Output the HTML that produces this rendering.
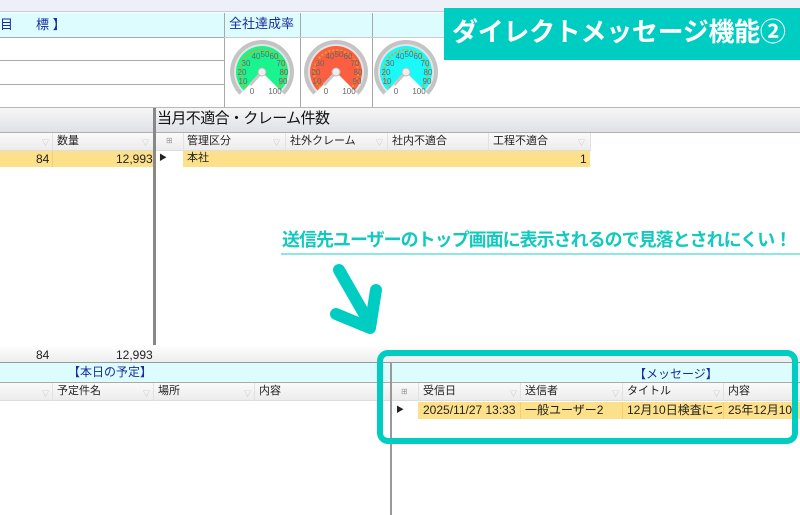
<!DOCTYPE html>
<html><head><meta charset="utf-8">
<style>
*{margin:0;padding:0;box-sizing:border-box}
body{width:800px;height:515px;overflow:hidden;background:#fff;position:relative;font-family:"Liberation Sans","Noto Sans CJK JP",sans-serif;font-size:11px;color:#222}
.a{position:absolute}
.hl{position:absolute;height:1px;background:#a8a8a8}
.vl{position:absolute;width:1px;background:#a8a8a8}
.cyan{background:#dcfcfd}
.hdr{background:linear-gradient(#fafafa,#ececec);border-bottom:1px solid #ddd}
.yel{background:#fde08a}
.t{position:absolute;white-space:nowrap;line-height:1}
.blue{color:#1a2c9c}
.f{position:absolute;font-size:7px;color:#bbb}
.sep{position:absolute;width:1px;background:#e2e2e2}
</style></head><body>
<div class="a" style="left:0;top:0;width:800px;height:11px;background:#eef0f8"></div>
<div class="hl" style="left:0;top:11px;width:800px;background:#c5cbe0"></div>
<div class="a cyan" style="left:0;top:13px;width:800px;height:24px"></div>
<div class="t blue" style="left:0;top:18px;font-size:13px">目</div>
<div class="t blue" style="left:36px;top:18px;font-size:13px">標 】</div>
<div class="t blue" style="left:229px;top:17px;font-size:13px">全社達成率</div>
<div class="hl" style="left:0;top:37px;width:224px"></div>
<div class="hl" style="left:0;top:60px;width:224px"></div>
<div class="hl" style="left:0;top:84px;width:224px"></div>
<div class="vl" style="left:224px;top:13px;height:94px"></div>
<div class="vl" style="left:300px;top:13px;height:94px"></div>
<div class="vl" style="left:372px;top:13px;height:94px"></div>
<div class="hl" style="left:224px;top:37px;width:230px;background:#ccc"></div>

<svg class="a" style="left:0;top:0" width="800" height="110">
<defs>
<g id="gb">
<path d="M0 0 L-22.6 22.6 A32 32 0 1 1 22.6 22.6 Z" fill="#c4c4c4"/>
<path d="M0 0 L-19.8 19.8 A28 28 0 1 1 19.8 19.8 Z" fill="#e4e4e4"/>
</g>
<g id="gt">
<path d="M-15.6 15.6 A22 22 0 1 1 15.6 15.6" fill="none" stroke="#e8a020" stroke-width="2" stroke-dasharray="2 2"/>
<g font-size="8" fill="#666" font-family="Liberation Sans,sans-serif" text-anchor="middle">
<text x="-6" y="-13">40</text><text x="3" y="-15">50</text><text x="12" y="-13">60</text>
<text x="-16" y="-6">30</text><text x="19" y="-6">70</text>
<text x="-20" y="3">20</text><text x="22" y="3">80</text>
<text x="-19" y="12">10</text><text x="21" y="12">90</text>
<text x="-10" y="22">0</text><text x="13" y="22">100</text></g>
<line x1="0" y1="0" x2="-12" y2="13" stroke="#c8c8c8" stroke-width="3"/>
<circle r="4" fill="#eee" stroke="#bbb"/>
</g>
</defs>
<g transform="translate(262,72)"><use href="#gb"/><path d="M0 0 L-18.4 18.4 A26 26 0 1 1 18.4 18.4 Z" fill="#19f48f"/><use href="#gt"/></g>
<g transform="translate(336,72)"><use href="#gb"/><path d="M0 0 L-18.4 18.4 A26 26 0 1 1 18.4 18.4 Z" fill="#fb5e40"/><use href="#gt"/></g>
<g transform="translate(406,72)"><use href="#gb"/><path d="M0 0 L-18.4 18.4 A26 26 0 1 1 18.4 18.4 Z" fill="#1af8f8"/><use href="#gt"/></g>
</svg>

<div class="a" style="left:444px;top:8px;width:356px;height:52px;background:#00cdc1"></div>
<div class="t" style="left:452px;top:19px;font-size:26px;font-weight:bold;color:#fff;letter-spacing:-0.3px">ダイレクトメッセージ機能②</div>

<div class="hl" style="left:0;top:107px;width:800px;background:#b8b8b8"></div>
<div class="a" style="left:0;top:108px;width:800px;height:24px;background:linear-gradient(#f6f6f6,#dfe1e6)"></div>
<div class="hl" style="left:0;top:132px;width:800px;background:#b0b0b0"></div>
<div class="t" style="left:157px;top:111px;font-size:15px;color:#111;letter-spacing:-0.6px">当月不適合・クレーム件数</div>
<div class="a" style="left:153px;top:108px;width:3px;height:255px;background:#888"></div>

<div class="a hdr" style="left:0;top:133px;width:153px;height:18px"></div>
<div class="a hdr" style="left:156px;top:133px;width:434px;height:18px"></div>
<div class="t" style="left:57px;top:136px">数量</div>
<div class="sep" style="left:52px;top:133px;height:18px"></div>
<div class="f" style="left:42px;top:138px">▽</div><div class="f" style="left:142px;top:138px">▽</div>
<div class="t" style="left:166px;top:137px;font-size:8px;color:#999">⊞</div>
<div class="t" style="left:187px;top:136px">管理区分</div>
<div class="t" style="left:290px;top:136px">社外クレーム</div>
<div class="t" style="left:392px;top:136px">社内不適合</div>
<div class="t" style="left:493px;top:136px">工程不適合</div>
<div class="sep" style="left:183px;top:133px;height:18px"></div>
<div class="sep" style="left:285px;top:133px;height:18px"></div>
<div class="sep" style="left:387px;top:133px;height:18px"></div>
<div class="sep" style="left:488px;top:133px;height:18px"></div>
<div class="sep" style="left:590px;top:133px;height:18px"></div>
<div class="f" style="left:273px;top:138px">▽</div><div class="f" style="left:376px;top:138px">▽</div><div class="f" style="left:578px;top:138px">▽</div>
<div class="a yel" style="left:0;top:151px;width:153px;height:16px"></div>
<div class="sep" style="left:52px;top:151px;height:16px;background:#f5d070"></div>
<div class="t" style="left:36px;top:153px;font-size:12px">84</div>
<div class="t" style="left:116px;top:153px;font-size:12px">12,993</div>
<div class="t" style="left:159px;top:154px;font-size:8px">▶</div>
<div class="a yel" style="left:183px;top:151px;width:407px;height:16px"></div>
<div class="t" style="left:187px;top:153px">本社</div>
<div class="t" style="left:580px;top:153px;font-size:12px">1</div>

<div class="t" style="left:282px;top:231px;font-size:18px;font-weight:bold;color:#12c9bf;letter-spacing:-1px">送信先ユーザーのトップ画面に表示されるので見落とされにくい！</div>
<div class="a" style="left:281px;top:253px;width:519px;height:2px;background:#8ee8e2"></div>
<svg class="a" style="left:325px;top:258px" width="70" height="80">
<path d="M14 12 L45 66" stroke="#00cdc1" stroke-width="12" stroke-linecap="round"/>
<path d="M11 56 L45 70 L51 32" fill="none" stroke="#00cdc1" stroke-width="12" stroke-linecap="round" stroke-linejoin="round"/>
</svg>

<div class="a" style="left:0;top:345px;width:800px;height:17px;background:linear-gradient(#fff,#eee)"></div>
<div class="t" style="left:36px;top:349px;font-size:12px">84</div>
<div class="t" style="left:116px;top:349px;font-size:12px">12,993</div>
<div class="hl" style="left:0;top:362px;width:800px;background:#999"></div>

<div class="a cyan" style="left:0;top:363px;width:800px;height:19px"></div>
<div class="hl" style="left:0;top:382px;width:800px;background:#aaa"></div>
<div class="t blue" style="left:68px;top:366px;font-size:12px">【本日の予定】</div>
<div class="t blue" style="left:634px;top:368px;font-size:12px">【メッセージ】</div>
<div class="a" style="left:390px;top:363px;width:2px;height:152px;background:#999"></div>
<div class="a hdr" style="left:0;top:383px;width:390px;height:18px"></div>
<div class="a hdr" style="left:392px;top:383px;width:408px;height:18px"></div>
<div class="sep" style="left:52px;top:383px;height:18px"></div>
<div class="sep" style="left:153px;top:383px;height:18px"></div>
<div class="sep" style="left:254px;top:383px;height:18px"></div>
<div class="f" style="left:42px;top:389px">▽</div><div class="f" style="left:143px;top:389px">▽</div><div class="f" style="left:244px;top:389px">▽</div>
<div class="t" style="left:57px;top:386px">予定件名</div>
<div class="t" style="left:158px;top:386px">場所</div>
<div class="t" style="left:259px;top:386px">内容</div>
<div class="t" style="left:401px;top:388px;font-size:8px;color:#999">⊞</div>
<div class="t" style="left:423px;top:386px">受信日</div>
<div class="t" style="left:525px;top:386px">送信者</div>
<div class="t" style="left:627px;top:386px">タイトル</div>
<div class="t" style="left:728px;top:386px">内容</div>
<div class="sep" style="left:418px;top:383px;height:18px"></div>
<div class="sep" style="left:520px;top:383px;height:18px"></div>
<div class="sep" style="left:622px;top:383px;height:18px"></div>
<div class="sep" style="left:723px;top:383px;height:18px"></div>
<div class="f" style="left:510px;top:389px">▽</div><div class="f" style="left:612px;top:389px">▽</div><div class="f" style="left:713px;top:389px">▽</div>
<div class="a yel" style="left:418px;top:402px;width:382px;height:17px"></div>
<div class="sep" style="left:520px;top:402px;height:17px;background:#f5d070"></div>
<div class="sep" style="left:622px;top:402px;height:17px;background:#f5d070"></div>
<div class="sep" style="left:723px;top:402px;height:17px;background:#f5d070"></div>
<div class="t" style="left:396px;top:406px;font-size:8px">▶</div>
<div class="t" style="left:423px;top:404px;font-size:12px">2025/11/27 13:33</div>
<div class="t" style="left:525px;top:404px;font-size:12px">一般ユーザー2</div>
<div class="a" style="left:627px;top:404px;width:95px;overflow:hidden;white-space:nowrap;font-size:12px;line-height:1">12月10日検査について</div>
<div class="a" style="left:728px;top:404px;width:66px;overflow:hidden;white-space:nowrap;font-size:12px;line-height:1">25年12月10日</div>

<div class="a" style="left:377px;top:350px;width:421px;height:94px;border:6px solid #00cdc1;border-radius:11px"></div>
</body></html>
